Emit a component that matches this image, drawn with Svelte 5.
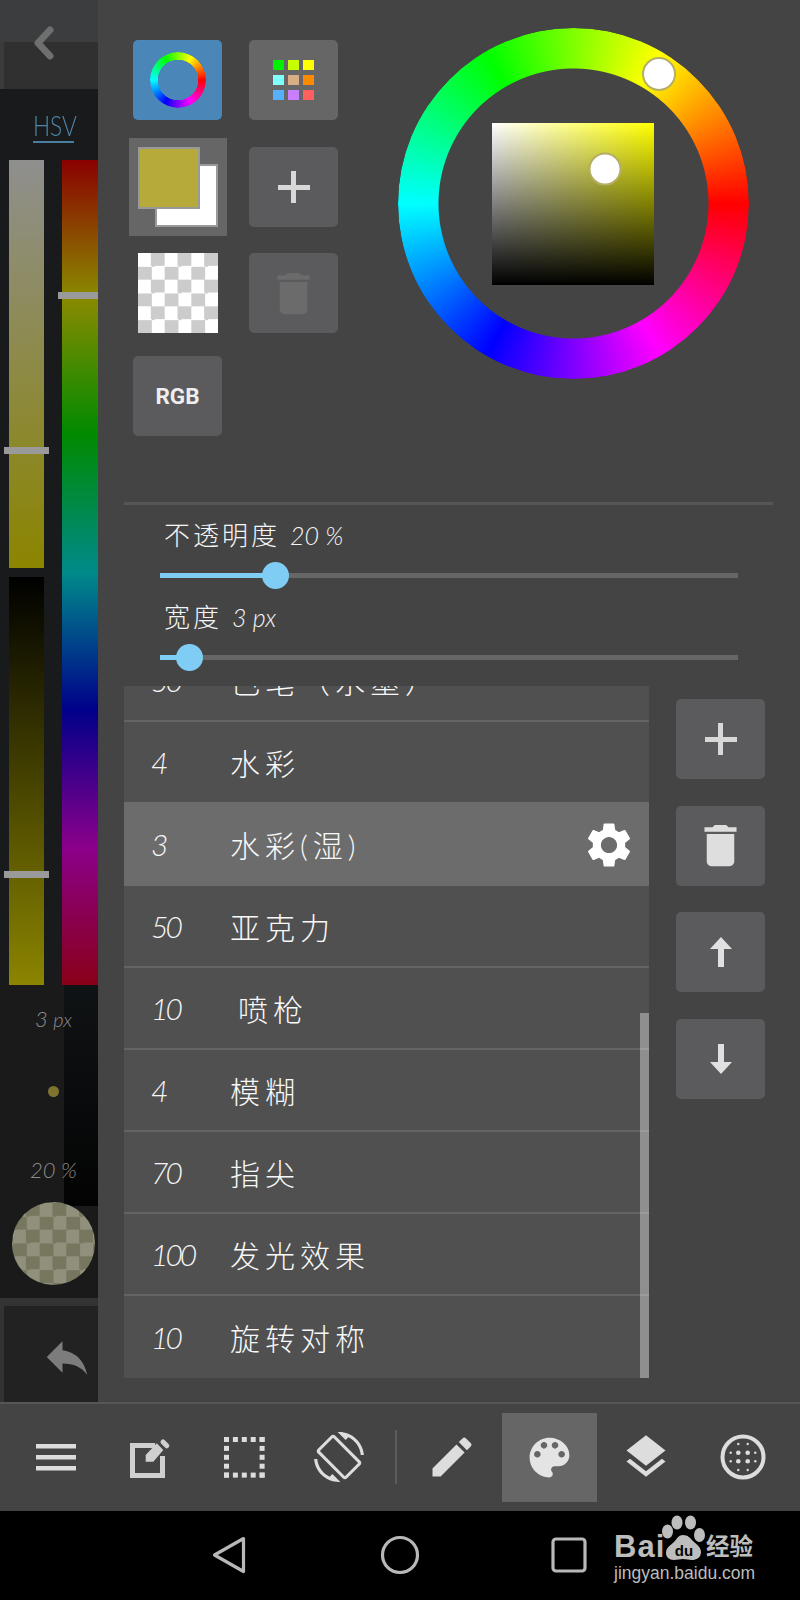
<script>
  const rows = [
    { n: '50', name: '色笔（水墨）' },
    { n: '4', name: '水彩' },
    { n: '3', name: '水彩(湿)', selected: true },
    { n: '50', name: '亚克力' },
    { n: '10', name: '喷枪', indent: true },
    { n: '4', name: '模糊' },
    { n: '70', name: '指尖' },
    { n: '100', name: '发光效果' },
    { n: '10', name: '旋转对称' }
  ];
  const sliders = [
    { label: '不透明度', value: '20', unit: '%', pct: 19.95 },
    { label: '宽度', value: '3', unit: 'px', pct: 5.02 }
  ];
  const colors = ['#00f000','#c8ff00','#ffff00','#80ffff','#d8ae86','#ff8a00','#55b0ff','#c87fff','#ff5f5f'];
  const dots = [0,1,2,3,4];
  const bigDots = [[-4.7,-4.3],[4.7,-4.3],[-4.7,4.3],[4.7,4.3]];
  const smallDots = [[-4.7,-13],[4.7,-13],[-12.3,-4.3],[12.3,-4.3],[-12.3,4.3],[12.3,4.3],[-4.7,13],[4.7,13]];
  const trash = 'M6 19c0 1.1.9 2 2 2h8c1.1 0 2-.9 2-2V7H6v12zM19 4h-3.5l-1-1h-5l-1 1H5v2h14V4z';
</script>

<div class="screen">
  <div class="main">
    <aside class="side">
      <div class="side-top">
        <svg class="chev" viewBox="0 0 24 34" width="24" height="34"><path d="M19 4 7 17l12 13" fill="none" stroke="#6f6f6f" stroke-width="7" stroke-linejoin="round" stroke-linecap="round"/></svg>
      </div>
      <div class="side-tab"><span class="hsv"><span class="hsv-t">HSV</span></span></div>
      <div class="bars">
        <div class="bar-col">
          <div class="bar sat"><i class="grip grip-s"></i></div>
          <div class="bar val"><i class="grip grip-v"></i></div>
        </div>
        <div class="bar hue"><i class="grip grip-h"></i></div>
      </div>
      <div class="readout">
        <span class="dim px">3 <em>px</em></span>
        <i class="dot"></i>
        <span class="dim pc">20 %</span>
        <i class="preview"></i>
      </div>
      <div class="undo">
        <svg viewBox="0 0 24 24" width="54" height="54"><path fill="#7c7c7c" d="M10 9V5l-7 7 7 7v-4.1c5 0 8.5 1.6 11 5.1-1-5-4-10-11-11z"/></svg>
      </div>
    </aside>

    <section class="panel">
      <div class="top">
        <div class="tools">
          <button class="btn blue"><i class="mini-wheel"></i></button>
          <button class="btn lighter">
            <span class="swatches">{#each colors as c}<i style="background:{c}"></i>{/each}</span>
          </button>
          <button class="swatch-btn"><i class="bg-swatch"></i><i class="fg-swatch"></i></button>
          <button class="btn"><i class="plus"></i></button>
          <button class="clear"></button>
          <button class="btn">
            <svg viewBox="0 0 24 24" width="55" height="55"><path fill="#6b6b6b" d={trash}/></svg>
          </button>
          <button class="btn rgb">RGB</button>
        </div>
        <div class="wheel">
          <i class="ring"></i>
          <i class="sv"></i>
          <i class="knob knob-h"></i>
          <i class="knob knob-sv"></i>
        </div>
      </div>

      <div class="sliders">
        {#each sliders as s}
          <div class="slider">
            <div class="s-label">{s.label} <span class="latin">{s.value} {s.unit}</span></div>
            <div class="track">
              <div class="fill" style="width:{s.pct}%"><i class="thumb"></i></div>
            </div>
          </div>
        {/each}
      </div>

      <div class="lower">
        <div class="list">
          <div class="scroll">
            {#each rows as r}
              <div class="row" class:selected={r.selected}>
                <span class="num">{r.n}</span>
                <span class="name" class:indent={r.indent}>{r.name}</span>
                {#if r.selected}
                  <svg class="gear" viewBox="0 0 24 24" width="54" height="54"><path fill="#fff" d="M19.14 12.94c.04-.3.06-.61.06-.94 0-.32-.02-.64-.07-.94l2.03-1.58c.18-.14.23-.41.12-.61l-1.92-3.32c-.12-.22-.37-.29-.59-.22l-2.39.96c-.5-.38-1.03-.7-1.62-.94l-.36-2.54c-.04-.24-.24-.41-.48-.41h-3.84c-.24 0-.43.17-.47.41l-.36 2.54c-.59.24-1.13.57-1.62.94l-2.39-.96c-.22-.08-.47 0-.59.22L2.74 8.87c-.12.21-.08.47.12.61l2.03 1.58c-.05.3-.09.63-.09.94s.02.64.07.94l-2.03 1.58c-.18.14-.23.41-.12.61l1.92 3.32c.12.22.37.29.59.22l2.39-.96c.5.38 1.03.7 1.62.94l.36 2.54c.05.24.24.41.48.41h3.84c.24 0 .44-.17.47-.41l.36-2.54c.59-.24 1.13-.56 1.62-.94l2.39.96c.22.08.47 0 .59-.22l1.92-3.32c.12-.22.07-.47-.12-.61l-2.01-1.58zM12 15.6c-1.98 0-3.6-1.62-3.6-3.6s1.62-3.6 3.6-3.6 3.6 1.62 3.6 3.6-1.62 3.6-3.6 3.6z"/></svg>
                {/if}
              </div>
            {/each}
          </div>
          <i class="scrollbar"></i>
        </div>
        <div class="actions">
          <button class="btn"><i class="plus"></i></button>
          <button class="btn"><svg viewBox="0 0 24 24" width="55" height="55"><path fill="#dedede" d={trash}/></svg></button>
          <button class="btn">
            <svg viewBox="0 0 24 32" width="24" height="32"><path fill="#e0e0e0" d="M12 1 23 13H15V31H9V13H1z"/></svg>
          </button>
          <button class="btn">
            <svg viewBox="0 0 24 32" width="24" height="32"><path fill="#e0e0e0" d="M12 31 23 19H15V1H9V19H1z"/></svg>
          </button>
        </div>
      </div>
    </section>
  </div>

  <nav class="toolbar">
    <span class="tb t1"><svg viewBox="0 0 40 27" width="40" height="27"><path fill="#ddd" d="M0 0h40v4.5H0zM0 11h40v4.5H0zM0 22h40v4.5H0z"/></svg></span>
    <span class="tb t2"><svg class="note" viewBox="0 0 44 44" width="44" height="44">
      <path d="M27 7.5H4.5V37.5H34.5V18" fill="none" stroke="#cfcfcf" stroke-width="5"/>
      <path fill="#cfcfcf" d="M17.7 17 28.7 5.300 35.300 12 25.300 23.700H17.700z"/>
      <path d="M35 4l3.800 3.800" stroke="#cfcfcf" stroke-width="5" stroke-linecap="round"/>
    </svg></span>
    <span class="tb t3"><svg viewBox="0 0 41 41" width="41" height="41">
      {#each dots as d}
        <rect x={d*8.9} y="0" width="5" height="5" fill="#ddd"/>
        <rect x={d*8.9} y="35.600" width="5" height="5" fill="#ddd"/>
        <rect x="0" y={d*8.9} width="5" height="5" fill="#ddd"/>
        <rect x="35.600" y={d*8.9} width="5" height="5" fill="#ddd"/>
      {/each}
    </svg></span>
    <span class="tb t4"><svg viewBox="0 0 24 24" width="50" height="50"><path fill="#ddd" d="M16.480 2.520c3.270 1.550 5.610 4.720 5.970 8.480h1.500C23.440 4.840 18.290 0 12 0l-.66.03 3.810 3.810 1.330-1.320zm-6.250-.77c-.59-.59-1.540-.59-2.120 0L1.750 8.110c-.59.59-.59 1.540 0 2.120l12.020 12.020c.59.59 1.540.59 2.120 0l6.360-6.360c.59-.59.59-1.540 0-2.120L10.230 1.750zm4.600 19.440L2.810 9.170l6.360-6.360 12.020 12.020-6.360 6.360zm-7.310.29C4.250 19.940 1.910 16.760 1.550 13H.05C.56 19.160 5.710 24 12 24l.66-.03-3.810-3.810-1.330 1.320z"/></svg></span>
    <i class="tb-sep"></i>
    <span class="tb t5"><svg viewBox="0 0 24 24" width="52" height="52"><path fill="#ddd" d="M3 17.250V21h3.750L17.810 9.940l-3.750-3.750L3 17.250zM20.710 7.040c.39-.39.39-1.020 0-1.410l-2.340-2.340c-.39-.39-1.020-.39-1.410 0l-1.830 1.830 3.750 3.750 1.830-1.830z"/></svg></span>
    <span class="tb t6"><svg viewBox="0 0 24 24" width="53" height="53"><path fill="#e4e4e4" d="M12 3c-4.970 0-9 4.030-9 9s4.030 9 9 9c.83 0 1.500-.67 1.500-1.500 0-.39-.15-.74-.39-1.010-.23-.26-.38-.61-.38-.99 0-.83.67-1.500 1.500-1.500H16c2.760 0 5-2.240 5-5 0-4.420-4.030-8-9-8zm-5.500 9c-.83 0-1.500-.67-1.500-1.500S5.670 9 6.500 9 8 9.670 8 10.500 7.330 12 6.500 12zm3-4C8.670 8 8 7.330 8 6.500S8.670 5 9.500 5s1.500.67 1.500 1.500S10.330 8 9.500 8zm5 0c-.83 0-1.500-.67-1.500-1.500S13.670 5 14.500 5s1.500.67 1.500 1.500S15.330 8 14.500 8zm3 4c-.83 0-1.500-.67-1.500-1.500S16.670 9 17.500 9s1.500.67 1.500 1.500-.67 1.500-1.500 1.500z"/></svg></span>
    <span class="tb t7"><svg viewBox="0 0 24 24" width="52" height="52"><path fill="#ddd" d="M11.990 18.540l-7.370-5.730L3 14.070l9 7 9-7-1.630-1.270-7.380 5.740zM12 16l7.360-5.730L21 9l-9-7-9 7 1.630 1.270L12 16z"/></svg></span>
    <span class="tb t8"><svg viewBox="-24 -24 48 48" width="48" height="48">
      <circle r="20.500" fill="none" stroke="#ddd" stroke-width="4"/>
      {#each bigDots as p}<circle cx={p[0]} cy={p[1]} r="2.300" fill="#ddd"/>{/each}
      {#each smallDots as p}<circle cx={p[0]} cy={p[1]} r="1.200" fill="#ddd"/>{/each}
    </svg></span>
  </nav>

  <footer class="sysnav">
    <svg class="nb nb-back" viewBox="0 0 36 40" width="36" height="40"><path d="M32.500 3.500 3.500 20l29 16.500z" fill="none" stroke="#b8b8b8" stroke-width="3.200" stroke-linejoin="round"/></svg>
    <svg class="nb nb-home" viewBox="0 0 40 40" width="40" height="40"><circle cx="20" cy="20" r="17.500" fill="none" stroke="#b8b8b8" stroke-width="3.200"/></svg>
    <svg class="nb nb-rec" viewBox="0 0 36 36" width="36" height="36"><rect x="2" y="2" width="32" height="32" rx="3" fill="none" stroke="#b8b8b8" stroke-width="3.200"/></svg>
    <div class="logo">
      <span class="bai">Bai</span>
      <svg class="paw" viewBox="0 0 44 46" width="44" height="46">
        <g fill="#bdbdbd">
          <ellipse cx="15" cy="7.500" rx="5.500" ry="7"/>
          <ellipse cx="28.500" cy="7.500" rx="5.500" ry="7"/>
          <ellipse cx="5.500" cy="16.500" rx="5.500" ry="7"/>
          <ellipse cx="37.500" cy="20" rx="5.500" ry="7"/>
          <path d="M21 20c5 0 7 3 10 6s8 6 8 11c0 6-5 8-9 8-3 0-6-1-9-1s-6 1-9 1c-5 0-8-3-8-7 0-6 5-8 8-11s4-7 9-7z"/>
        </g>
        <text x="22" y="41" text-anchor="middle" class="du">du</text>
      </svg>
      <span class="jy">经验</span>
      <span class="url">jingyan.baidu.com</span>
    </div>
  </footer>
</div>

<style>
  :global(body) { margin: 0; background: #444; }
  * { box-sizing: border-box; }
  i { display: block; font-style: normal; }
  button { border: 0; padding: 0; margin: 0; display: flex; align-items: center; justify-content: center; }

  .screen { width: 800px; height: 1600px; display: flex; flex-direction: column; overflow: hidden; font-family: "Lato", "Noto Sans CJK SC", sans-serif; color: #f0f0f0; }
  .main { height: 1402px; display: flex; }

  /* sidebar */
  .side { width: 98px; flex: none; display: flex; flex-direction: column; background: #191a1c; }
  .side-top { height: 89px; background: linear-gradient(#3c3d3f 0 42px, transparent 42px), linear-gradient(90deg, #3a3b3d 0 4px, #303030 4px); display: flex; padding: 26px 0 0 31px; }
  .side-tab { height: 71px; display: flex; justify-content: center; padding: 23px 0 0 9px; }
  .hsv { width: 41px; height: 31px; border-bottom: 2px solid #4a7d9e; }
  .hsv-t { display: block; font-size: 27px; line-height: 27px; font-weight: 300; color: #4f86aa; transform: scaleX(.84); transform-origin: left center; }
  .bars { height: 825px; display: flex; padding-left: 9px; gap: 18px; }
  .bar-col { width: 35px; display: flex; flex-direction: column; justify-content: space-between; }
  .bar { position: relative; }
  .sat { height: 408px; background: linear-gradient(#8f8f8f, #8b8500); }
  .val { height: 408px; background: linear-gradient(#000, #8b8500); }
  .hue { width: 36px; background: linear-gradient(#8a0000, #8a8a00 16.67%, #008a00 33.33%, #008a8a 50%, #00008a 66.67%, #8a008a 83.33%, #8a0018); }
  .grip { position: absolute; height: 7px; background: #9a9a9a; }
  .grip-s { left: -5px; width: 45px; top: 287px; }
  .grip-v { left: -5px; width: 45px; top: 294px; }
  .grip-h { left: -4px; width: 40px; top: 132px; }
  .readout { height: 313px; display: flex; flex-direction: column; align-items: center; padding-left: 9px; background: linear-gradient(#101315, #030303) right top / 34px 221px no-repeat, #1a1a1a; }
  .dim { color: #8a8a8a; font-size: 22px; line-height: 26px; font-weight: 300; font-style: italic; }
  .px { margin-top: 21px; }
  .px em { font-size: 20px; }
  .dot { width: 11px; height: 11px; border-radius: 50%; background: #7d7430; margin-top: 54px; }
  .pc { margin-top: 60px; }
  .preview { width: 83px; height: 83px; border-radius: 50%; margin-top: 19px; background: repeating-conic-gradient(#77775f 0 25%, #90907c 0 50%) 1px 1px / 26.660px 26.660px; }
  .undo { height: 104px; background: linear-gradient(#333 0 8px, transparent 8px), linear-gradient(90deg, #333 0 4px, #222 4px); display: flex; align-items: flex-end; padding: 0 0 18px 40px; }

  /* panel */
  .panel { flex: 1; padding-left: 26px; background: #444; display: flex; flex-direction: column; }
  .top { height: 505px; width: 649px; border-bottom: 3px solid #565656; display: flex; padding: 28px 0 0 9px; }
  .tools { margin-top: 12px; display: grid; grid-template-columns: 89px 89px; grid-template-rows: 107px 106px 103px 80px; column-gap: 27px; align-items: start; width: 205px; flex: none; }
  .btn { width: 89px; height: 80px; border-radius: 5px; background: #5b5b5d; }
  .blue { background: #4a86b8; }
  .lighter { background: #666; }
  .mini-wheel { width: 56px; height: 56px; border-radius: 50%; background: conic-gradient(from 90deg, #f00, #f0f, #00f, #0ff, #0f0, #ff0, #f00); -webkit-mask: radial-gradient(circle, transparent 20px, #000 20.500px); mask: radial-gradient(circle, transparent 20px, #000 20.500px); }
  .swatches { display: grid; grid-template-columns: repeat(3, 10.500px); grid-auto-rows: 10.500px; gap: 4.500px; }
  .swatch-btn { position: relative; width: 98px; height: 98px; margin: -9px -4px -9px -4px; background: #666; }
  .fg-swatch, .bg-swatch { position: absolute; border: 2.500px solid #999; }
  .bg-swatch { left: 26px; top: 26px; width: 63px; height: 63px; background: #fff; }
  .fg-swatch { left: 9px; top: 9px; width: 62px; height: 62px; background: #b5aa3a; }
  .clear { width: 80px; height: 80px; margin-left: 5px; background: repeating-conic-gradient(#ccc 0 25%, #fff 0 50%) 0 0 / 26.660px 26.660px; }
  .rgb { color: #eee; font: 700 22.500px "Roboto", sans-serif; }
  .plus { width: 32px; height: 32px; background: linear-gradient(#d8d8d8, #d8d8d8) center / 32px 5px no-repeat, linear-gradient(#d8d8d8, #d8d8d8) center / 5px 32px no-repeat; }

  .wheel { position: relative; width: 351px; height: 351px; margin-left: 59.500px; display: grid; place-items: center; flex: none; }
  .ring { position: absolute; inset: 0; border-radius: 50%; background: conic-gradient(from 90deg, #f00, #f0f, #00f, #0ff, #0f0, #ff0, #f00); -webkit-mask: radial-gradient(circle, transparent 134.500px, #000 135.500px); mask: radial-gradient(circle, transparent 134.500px, #000 135.500px); }
  .sv { width: 162px; height: 162px; background: linear-gradient(to top, #000, transparent), linear-gradient(to right, #fff, #ff0); }
  .knob { position: absolute; border-radius: 50%; background: #fff; border: 2px solid #b5ae66; transform: translate(-50%, -50%); }
  .knob-h { width: 34px; height: 34px; left: 261.500px; top: 46px; }
  .knob-sv { width: 33px; height: 33px; left: 207.800px; top: 141px; }

  /* sliders */
  .sliders { height: 181px; padding: 13px 0 0 36px; display: flex; flex-direction: column; gap: 22px; }
  .slider { width: 578px; }
  .s-label { height: 34px; line-height: 34px; font-size: 26px; padding-left: 4px; letter-spacing: 3px; font-weight: 300; margin-bottom: 21px; color: #f6f6f6; }
  .latin { font-style: italic; letter-spacing: 0; font-size: 25px; }
  .track { height: 5px; background: #666; position: relative; }
  .fill { height: 5px; background: #7fcdf5; position: relative; }
  .thumb { position: absolute; right: -13.500px; top: -11px; width: 27px; height: 27px; border-radius: 50%; background: #7fcdf5; }

  /* list */
  .lower { display: flex; gap: 27px; height: 716px; }
  .list { position: relative; width: 525px; height: 692px; overflow: hidden; background: #505050; flex: none; }
  .scroll { margin-top: -46px; display: flex; flex-direction: column; }
  .row { position: relative; flex: none; height: 82px; border-bottom: 2px solid #646464; display: flex; align-items: center; padding-left: 27px; }
  .row:last-child { border-bottom: 0; }
  .row.selected { height: 84px; margin-top: -2px; background: #6c6c6c; border-bottom: 0; }
  .num { width: 79px; font-size: 30px; font-weight: 300; font-style: italic; letter-spacing: -3px; color: #f6f6f6; }
  .name { font-size: 30px; letter-spacing: 5px; font-weight: 300; color: #f8f8f8; }
  .name.indent { margin-left: 8px; }
  .gear { position: absolute; left: 458px; top: 16px; }
  .scrollbar { position: absolute; right: 0; bottom: 0; width: 9px; height: 365px; background: rgba(255, 255, 255, .36); }
  .actions { display: flex; flex-direction: column; gap: 26.700px; padding-top: 13px; }

  /* toolbar */
  .toolbar { height: 109px; border-top: 2.500px solid #565656; background: #444; display: flex; align-items: center; padding-left: 9px; }
  .tb { height: 89px; display: flex; align-items: center; justify-content: center; flex: none; }
  .t1 { width: 94px; } .t2 { width: 94px; } .t3 { width: 94px; } .t4 { width: 96px; }
  .note { margin-top: 5px; }
  .tb-sep { width: 2px; height: 54px; background: #5c5c5c; margin: 0 5px 0 8px; }
  .t5 { width: 100px; } .t6 { width: 95px; background: #666; } .t7 { width: 98px; } .t8 { width: 96px; }

  /* system nav */
  .sysnav { position: relative; height: 89.500px; background: #000; display: flex; align-items: center; }
  .nb-back { margin: 0 0 0 211px; }
  .nb-home { margin: 0 0 0 133px; }
  .nb-rec { margin: 0 0 0 131px; }
  .logo { position: absolute; left: 612px; top: 4px; width: 150px; height: 80px; color: #bdbdbd; font-family: "Liberation Sans", "Noto Sans CJK SC", sans-serif; }
  .bai { position: absolute; left: 2px; top: 14px; font-size: 31px; line-height: 36px; font-weight: 700; letter-spacing: 1px; }
  .paw { position: absolute; left: 50px; top: 0; }
  .du { font: 700 15px "Liberation Sans", sans-serif; fill: #000; }
  .jy { position: absolute; left: 94px; top: 16px; font-size: 23.500px; line-height: 32px; font-weight: 700; white-space: nowrap; }
  .url { position: absolute; left: 2px; top: 47px; font-size: 17.500px; line-height: 22px; white-space: nowrap; }
</style>
